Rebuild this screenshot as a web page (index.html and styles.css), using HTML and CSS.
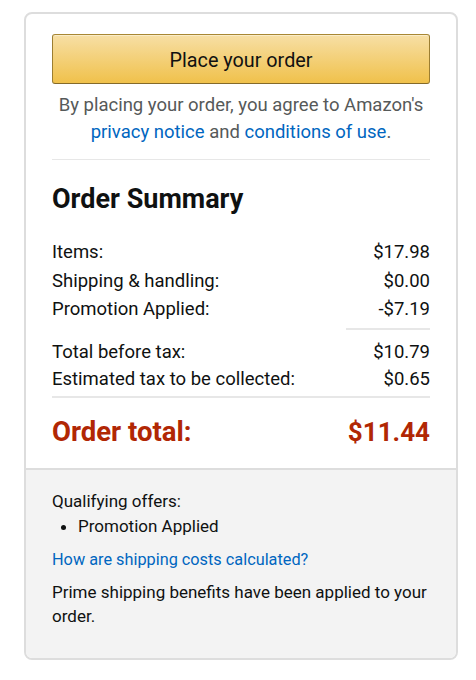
FILE: index.html
```html
<!DOCTYPE html>
<html lang="en">
<head>
<meta charset="utf-8">
<title>Order Summary</title>
<link rel="stylesheet" href="styles.css">
</head>
<body>
<div class="page">
  <div class="card">
    <div class="main">
      <button class="place" type="button">Place your order</button>
      <p class="agree">By placing your order, you agree to Amazon's <a href="#">privacy notice</a> and <a href="#">conditions of use</a>.</p>
      <hr class="rule">
      <h2 class="title">Order Summary</h2>
      <div class="rows">
        <div class="row"><span>Items:</span><span>$17.98</span></div>
        <div class="row"><span>Shipping &amp; handling:</span><span>$0.00</span></div>
        <div class="row"><span>Promotion Applied:</span><span>-$7.19</span></div>
        <hr class="short-rule">
        <div class="row row-tight"><span>Total before tax:</span><span>$10.79</span></div>
        <div class="row row-tight"><span>Estimated tax to be collected:</span><span>$0.65</span></div>
      </div>
      <hr class="rule rule-total">
      <div class="total"><span class="total-label">Order total:</span><span class="total-amount">$11.44</span></div>
    </div>
    <div class="extra">
      <p class="offers">Qualifying offers:</p>
      <ul class="offer-list"><li>Promotion Applied</li></ul>
      <a class="ship-link" href="#">How are shipping costs calculated?</a>
      <p class="prime">Prime shipping benefits have been applied to your order.</p>
    </div>
  </div>
</div>
</body>
</html>
```
FILE: styles.css
```css
html, body {
  margin: 0;
  padding: 0;
  background: #fff;
}
body {
  font-family: Roboto, "Liberation Sans", Arial, sans-serif;
  color: #0f1111;
  font-size: 17px;
}
.page {
  padding: 12px 18px 0 24px;
}
.card {
  border: 2px solid #dddddd;
  border-radius: 8px;
  overflow: hidden;
}
.main {
  padding: 20px 26px 19px 26px;
}
.place {
  display: block;
  width: 100%;
  height: 50px;
  border: 1px solid;
  border-color: #a88734 #9c7e31 #846a29;
  border-radius: 3px;
  background: linear-gradient(to bottom, #f7dfa5, #f0c14b);
  box-shadow: inset 0 1px 0 rgba(255,255,255,0.4);
  font-family: inherit;
  font-size: 19.8px;
  color: #111;
  padding: 2px 0 0;
  cursor: pointer;
}
.agree {
  margin: 8px 0 0;
  text-align: center;
  line-height: 27px;
  font-size: 18.5px;
  color: #565959;
}
.agree a, .ship-link {
  color: #0066c0;
  text-decoration: none;
}
.rule {
  border: 0;
  border-top: 1px solid #e7e7e7;
  margin: 13px 0 0;
}
.title {
  margin: 22px 0 0;
  font-size: 27px;
  line-height: 34px;
  font-weight: 700;
}
.rows {
  margin-top: 22px;
  display: flex;
  flex-direction: column;
  font-size: 18.5px;
}
.row {
  display: flex;
  justify-content: space-between;
  line-height: 28.5px;
}
.row-tight {
  line-height: 27.5px;
}
.short-rule {
  border: 0;
  border-top: 2px solid #e7e7e7;
  width: 84px;
  align-self: flex-end;
  margin: 4px 0 9px;
}
.rule-total {
  border-top-width: 2px;
  margin-top: 2px;
}
.total {
  display: flex;
  justify-content: space-between;
  align-items: baseline;
  margin-top: 17.5px;
  line-height: 34px;
  font-weight: 700;
  color: #b12704;
}
.total-label {
  font-size: 27.5px;
}
.total-amount {
  font-size: 26px;
}
.extra {
  background: #f3f3f3;
  border-top: 2px solid #dddddd;
  padding: 19px 26px 30px;
  line-height: 24px;
}
.offers {
  margin: 0;
}
.offer-list {
  margin: 1px 0 0;
  padding-left: 26px;
}
.ship-link {
  display: block;
  margin-top: 10px;
  font-size: 16.3px;
}
.prime {
  margin: 8px 0 0;
}
```
